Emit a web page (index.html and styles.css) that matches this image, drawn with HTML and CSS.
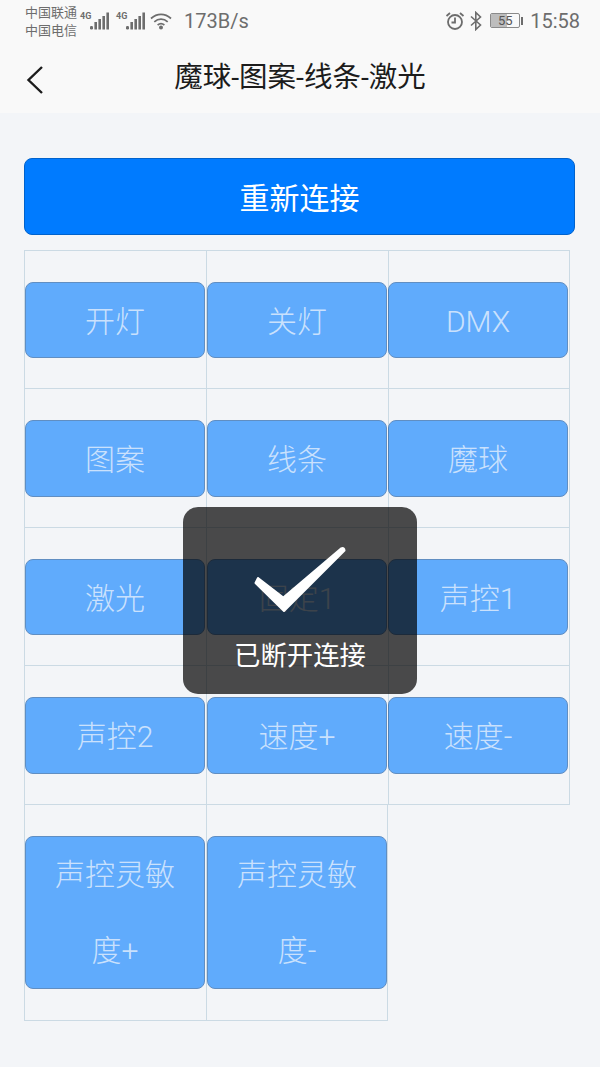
FILE: index.html
```html
<!DOCTYPE html>
<html>
  <head>
    <meta charset="utf-8" />
    <title>魔球-图案-线条-激光</title>
    <link rel="stylesheet" href="styles.css">
  </head>

  <body>
    <!-- status bar -->
    <div class="status-bar">
      <div class="carriers">
        <div>中国联通</div>
        <div>中国电信</div>
      </div>
      <div class="net">
        <span class="net-label">4G</span>
        <svg class="signal" width="20" height="18" viewBox="0 0 20 18">
          <rect x="0" y="14" width="3" height="3.5" rx="1.2" />
          <rect x="4.4" y="10" width="2.6" height="7.5" />
          <rect x="8.4" y="7" width="2.6" height="10.5" />
          <rect x="12.4" y="4" width="2.6" height="13.5" />
          <rect x="16.4" y="0.5" width="2.6" height="17" />
        </svg>
        <span class="net-label second">4G</span>
        <svg class="signal" width="20" height="18" viewBox="0 0 20 18">
          <rect x="0" y="14" width="3" height="3.5" rx="1.2" />
          <rect x="4.4" y="10" width="2.6" height="7.5" />
          <rect x="8.4" y="7" width="2.6" height="10.5" />
          <rect x="12.4" y="4" width="2.6" height="13.5" />
          <rect x="16.4" y="0.5" width="2.6" height="17" />
        </svg>
        <svg class="wifi" width="24" height="18" viewBox="0 0 24 18">
          <path d="M1 6.5C7 1 15 1 21 6.5M4.3 9.8C8.3 6.3 13.7 6.3 17.7 9.8M7.6 13C9.8 11.3 12.2 11.3 14.4 13" fill="none" stroke="#6d6d6d" stroke-width="1.7" />
          <circle cx="11" cy="15.6" r="2" fill="#6d6d6d" />
        </svg>
        <span class="speed">173B/s</span>
      </div>
      <div class="status-right">
        <svg class="alarm" width="20" height="20" viewBox="0 0 20 20" fill="none" stroke="#6d6d6d" stroke-width="1.8">
          <circle cx="10" cy="11" r="7" />
          <path d="M10 6.5V11.5H6.5M1.5 5L5 2M18.5 5L15 2" />
        </svg>
        <svg class="bt" width="12" height="20" viewBox="0 0 12 20" fill="none" stroke="#6d6d6d" stroke-width="1.6">
          <path d="M1 5.5L10.5 14L5.8 18.5V1.5L10.5 6L1 14.5" />
        </svg>
        <div class="battery">
          <div class="battery-body"><span class="battery-fill"></span><span class="battery-num">55</span></div>
          <div class="battery-tip"></div>
        </div>
        <span class="clock">15:58</span>
      </div>
    </div>

    <!-- title bar -->
    <div class="nav-bar">
      <svg class="back" width="20" height="30" viewBox="0 0 20 30" fill="none" stroke="#1c1c1c" stroke-width="2.4">
        <path d="M17 2L3.5 15L17 28" />
      </svg>
      <div class="nav-title">魔球-图案-线条-激光</div>
    </div>

    <div class="content">
      <button class="btn main-btn">重新连接</button>

      <div class="btn-grid">
        <div class="cell"><button class="btn" disabled>开灯</button></div>
        <div class="cell"><button class="btn" disabled>关灯</button></div>
        <div class="cell"><button class="btn" disabled>DMX</button></div>
        <div class="cell"><button class="btn" disabled>图案</button></div>
        <div class="cell"><button class="btn" disabled>线条</button></div>
        <div class="cell"><button class="btn" disabled>魔球</button></div>
        <div class="cell"><button class="btn" disabled>激光</button></div>
        <div class="cell"><button class="btn" disabled>固定1</button></div>
        <div class="cell"><button class="btn" disabled>声控1</button></div>
        <div class="cell"><button class="btn" disabled>声控2</button></div>
        <div class="cell"><button class="btn" disabled>速度+</button></div>
        <div class="cell"><button class="btn" disabled>速度-</button></div>
        <div class="cell last"><button class="btn" disabled>声控灵敏度+</button></div>
        <div class="cell last end"><button class="btn" disabled>声控灵敏度-</button></div>
      </div>
    </div>

    <!-- toast -->
    <div class="toast">
      <svg class="toast-icon" width="94" height="68" viewBox="0 0 94 68">
        <path d="M5 32L30.3 51.5L88 2.5Q91.5 1 91.5 4.5L31 65L2.5 37Z" fill="#fff" stroke="#fff" stroke-width="2" stroke-linejoin="round" />
      </svg>
      <div class="toast-text">已断开连接</div>
    </div>
  </body>
</html>
```

FILE: styles.css
```css
html,
body {
  margin: 0;
  padding: 0;
  height: 1067px;
  overflow: hidden;
  background-color: #f3f5f8;
  font-family: "Roboto", "Noto Sans CJK SC", sans-serif;
  position: relative;
}

/* status bar */
.status-bar {
  height: 43px;
  background-color: #f9f9f9;
  display: flex;
  align-items: center;
  padding: 0 20px 3px 25px;
  color: #6d6d6d;
}

.carriers {
  font-size: 13px;
  line-height: 18px;
  width: 55px;
  margin-top: 1px;
}

.net {
  display: flex;
  align-items: center;
  flex: 1;
}

.net-label {
  font-size: 9px;
  font-weight: 700;
  width: 10px;
  margin-bottom: 11px;
}

.net-label.second {
  margin-left: 6px;
}

.signal {
  fill: #6d6d6d;
  margin-top: -1px;
}

.wifi {
  margin-left: 4px;
  margin-top: -2px;
}

.speed {
  font-size: 20px;
  margin-left: 10px;
  margin-top: -2px;
}

.status-right {
  display: flex;
  align-items: center;
}

.alarm {
  margin-right: 5px;
  margin-top: -2px;
}

.bt {
  margin-right: 8px;
  margin-top: -2px;
}

.battery {
  display: flex;
  align-items: center;
  margin-top: -2px;
}

.battery-body {
  width: 28px;
  height: 13px;
  border: 1px solid #8a8a8a;
  border-radius: 2px;
  position: relative;
  overflow: hidden;
}

.battery-fill {
  position: absolute;
  left: 0;
  top: 0;
  bottom: 0;
  width: 55%;
  background-color: #bdbdbd;
}

.battery-num {
  position: relative;
  display: block;
  text-align: center;
  font-size: 13px;
  line-height: 14px;
  color: #555;
}

.battery-tip {
  width: 2px;
  height: 8px;
  margin-left: 1px;
  background-color: #6d6d6d;
}

.clock {
  font-size: 20px;
  margin-left: 7px;
  margin-top: -2px;
}

/* title bar */
.nav-bar {
  height: 67px;
  background-color: #f9f9f9;
  display: flex;
  align-items: center;
  justify-content: center;
  position: relative;
}

.back {
  position: absolute;
  left: 25px;
  top: 19px;
}

.nav-title {
  font-size: 28.5px;
  color: #1c1c1c;
  margin-top: -10px;
}

/* buttons */
.content {
  padding: 45px 24px 0;
}

.btn {
  display: block;
  width: 180px;
  box-sizing: border-box;
  margin: 0;
  padding: 4px 24px 0;
  border: 1px solid #004a9f;
  border-radius: 8px;
  background-color: #007bff;
  color: #fff;
  font-family: inherit;
  font-size: 30px;
  line-height: 70.4px;
}

.btn:disabled {
  opacity: 0.6;
  color: rgba(255, 255, 255, 0.7);
  font-weight: 300;
}

.main-btn {
  width: 551px;
  height: 77px;
  line-height: 71px;
  border-color: #0062cc;
}

.btn-grid {
  display: grid;
  grid-template-columns: repeat(3, 182px);
  width: 546px;
  margin-top: 15px;
  border-top: 1px solid #cbdae4;
}

.cell {
  box-sizing: border-box;
  border-left: 1px solid #cbdae4;
  border-bottom: 1px solid #cbdae4;
  padding: 31px 1px 30px 0;
}

.cell:nth-child(3n) {
  border-right: 1px solid #cbdae4;
  padding-right: 0;
}

.cell:nth-child(3n) .btn {
  margin-left: -1px;
}

.cell.end {
  border-right: 1px solid #cbdae4;
}

.cell.last {
  padding-bottom: 31px;
}

.cell.last .btn {
  height: 153px;
  padding-top: 0;
  line-height: 76.5px;
}

/* toast over the buttons */
.toast {
  position: absolute;
  left: 183px;
  top: 507px;
  width: 234px;
  height: 187px;
  box-sizing: border-box;
  padding-top: 39px;
  border-radius: 15px;
  background-color: rgba(0, 0, 0, 0.7);
  color: #fff;
  display: flex;
  flex-direction: column;
  align-items: center;
}

.toast-text {
  font-size: 26.4px;
  line-height: 36px;
  margin-top: 24px;
}
```
